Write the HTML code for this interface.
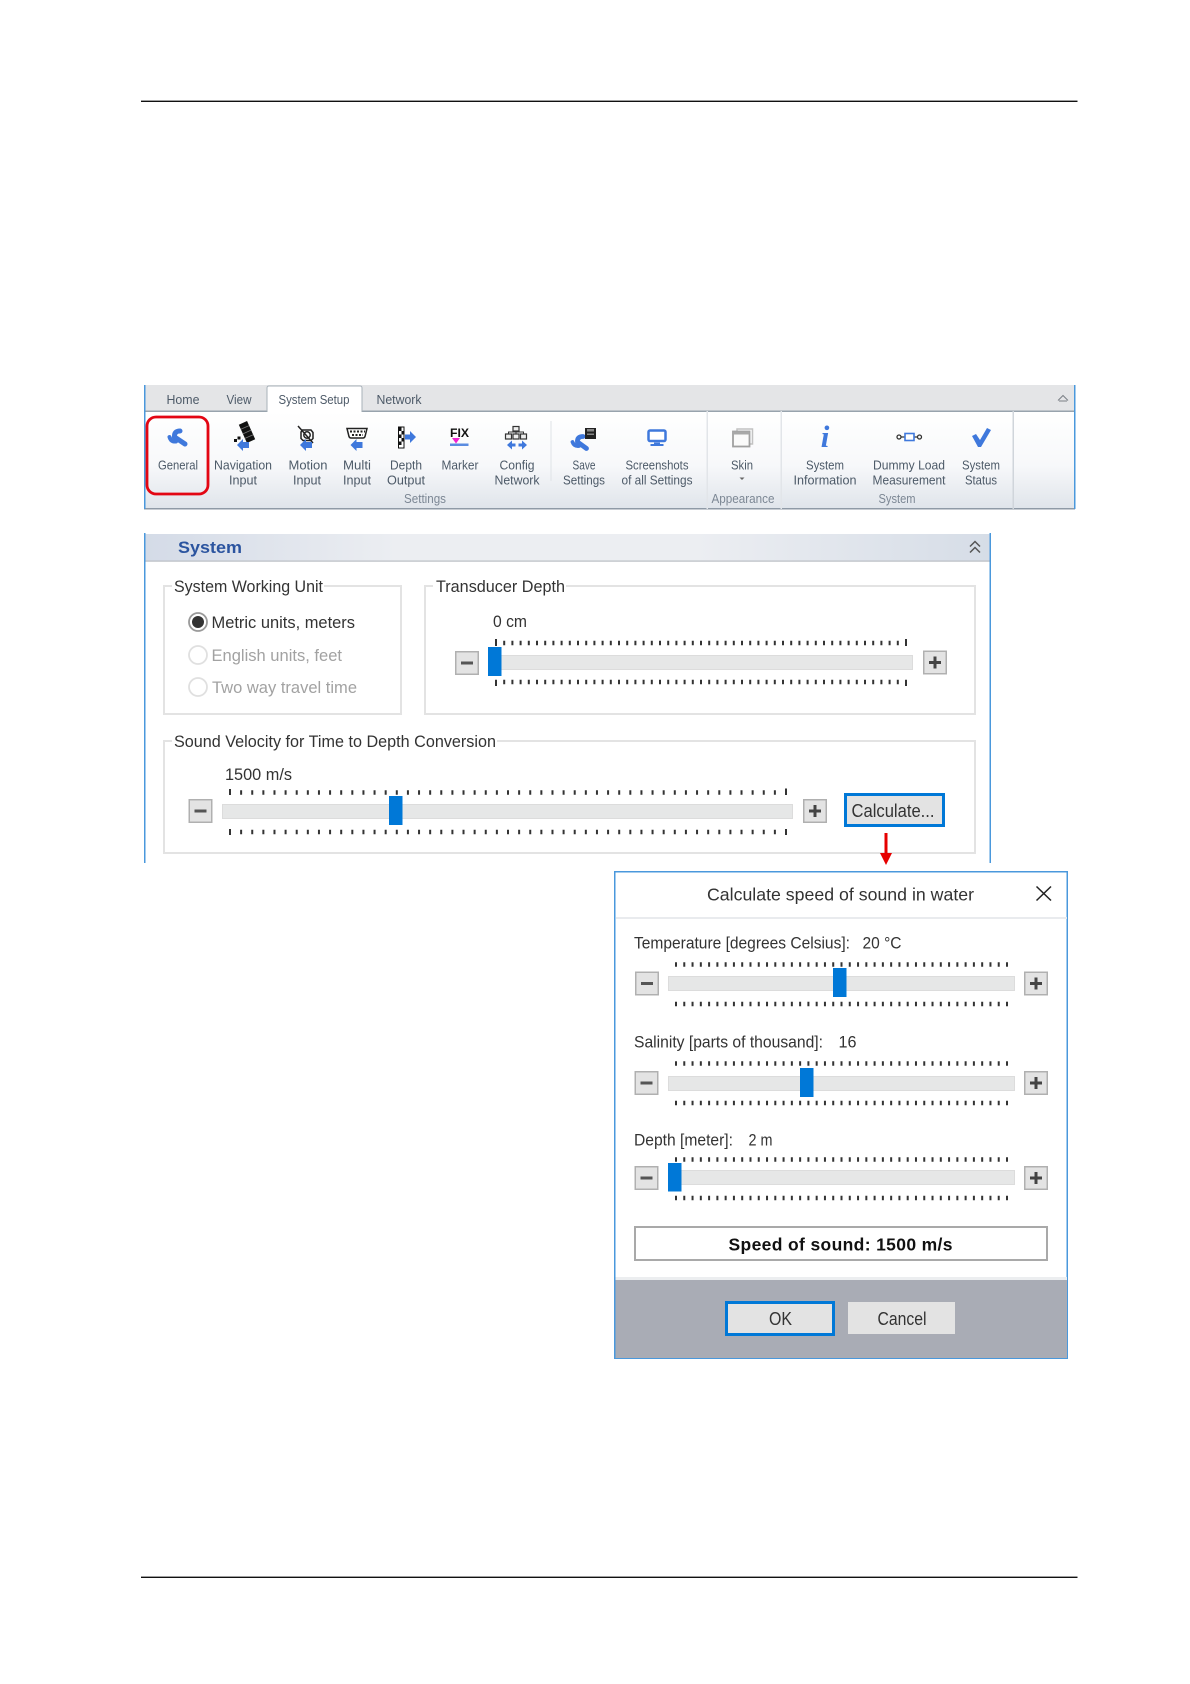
<!DOCTYPE html>
<html><head><meta charset="utf-8"><title>System Setup</title>
<style>
html,body{margin:0;padding:0;background:#fff;width:1190px;height:1684px;overflow:hidden}
svg{display:block;font-family:"Liberation Sans",sans-serif;filter:blur(.3px)}
.r{font-size:13px;fill:#4d5a68;text-anchor:middle}
.g{font-size:13px;fill:#7c8794;text-anchor:middle}
.t{font-size:17px;fill:#333}
.d{font-size:17px;fill:#a2a2a2}
.tk{stroke:#333;fill:none}
.bb{fill:#e3e3e3;stroke:#b0b0b0;stroke-width:1.5}
.tr{fill:#e6e7e7;stroke:#dcdcdc}
.th{fill:#0078d7}
.gb{fill:none;stroke:#e3e3e3;stroke-width:2}
.bl{fill:#3f78dc}
</style></head><body>
<svg width="1190" height="1684" viewBox="0 0 1190 1684" xmlns="http://www.w3.org/2000/svg">
<defs>
<linearGradient id="rb" x1="0" y1="0" x2="0" y2="1"><stop offset="0" stop-color="#fff"/><stop offset=".55" stop-color="#f7f8fa"/><stop offset="1" stop-color="#dfe4ea"/></linearGradient>
<linearGradient id="hd" x1="0" y1="0" x2="1" y2="0"><stop offset="0" stop-color="#d4dbe7"/><stop offset=".3" stop-color="#eceef2"/><stop offset=".65" stop-color="#eceef2"/><stop offset="1" stop-color="#d6dde7"/></linearGradient>
<g id="minus"><rect class="bb" x=".75" y=".75" width="22.5" height="22.5"/><rect x="6" y="10.5" width="12" height="3" fill="#555"/></g>
<g id="plus"><rect class="bb" x=".75" y=".75" width="22.5" height="22.5"/><rect x="6" y="10.5" width="12" height="3" fill="#444"/><rect x="10.5" y="6" width="3" height="12" fill="#444"/></g>
<path id="arl" d="M-6 0L0-6V-3H6V3H0V6Z" class="bl"/>
</defs>
<rect width="1190" height="1684" fill="#fff"/>
<rect x="141" y="100.6" width="936.500" height="1.4" fill="#111"/>
<rect x="141" y="1576.6" width="936.500" height="1.4" fill="#111"/>

<!-- ribbon -->
<rect x="144" y="385" width="931" height="26" fill="#e4e5e7"/>
<rect x="144" y="411" width="931" height="98" fill="url(#rb)"/>
<rect x="144" y="410.5" width="931" height="1.5" fill="#98a3ad"/>
<rect x="144" y="508" width="931" height="1.5" fill="#8f9aa6"/>
<rect x="144" y="385" width="1.5" height="124" fill="#4a98dc"/>
<rect x="1074" y="385" width="1.5" height="124" fill="#4a98dc"/>
<path d="M267 411V388Q267 386 269 386H360Q362 386 362 388V411H267Z" fill="#fff" stroke="#a9b2ba"/>
<rect x="267.500" y="410" width="94" height="3" fill="#fff"/>
<text class="r" x="183" y="404" textLength="33" lengthAdjust="spacingAndGlyphs">Home</text>
<text class="r" x="239" y="404" textLength="25" lengthAdjust="spacingAndGlyphs">View</text>
<text class="r" x="314" y="404" textLength="71" lengthAdjust="spacingAndGlyphs">System Setup</text>
<text class="r" x="399" y="404" textLength="45" lengthAdjust="spacingAndGlyphs">Network</text>
<path d="M1058 400.500L1063 395.500L1068 400.500M1059 401H1067" fill="none" stroke="#7a7f85" stroke-width="1"/>
<rect x="550.500" y="421" width="1" height="60" fill="#dfe3e7"/>
<rect x="706.500" y="411" width="1.500" height="98" fill="#e2e5e9"/>
<rect x="780.500" y="411" width="1.500" height="98" fill="#e2e5e9"/>
<rect x="1012.500" y="411" width="1.500" height="98" fill="#d0d5db"/>

<rect x="147" y="417" width="61" height="77" rx="9" fill="none" stroke="#e30613" stroke-width="2.800"/>

<!-- ribbon icons -->
<g fill="none" stroke="#3f78dc" stroke-linecap="round">
<path d="M180 431Q174 431 174.500 437L185 444" stroke-width="5"/>
<path d="M169.500 437Q171 442 176 441.500" stroke-width="4"/>
</g>
<!-- navigation -->
<g transform="translate(247 432) rotate(-24)"><rect x="-4.500" y="-10" width="9" height="20" fill="#111"/><path d="M-4.500-5H4.500M-4.500 0H4.500M-4.500 5H4.500" stroke="#777" stroke-width=".8"/></g>
<rect x="234" y="439" width="3" height="3" fill="#111"/><rect x="237.500" y="436.500" width="3" height="3" fill="#111"/>
<use href="#arl" x="243" y="445"/>
<!-- motion -->
<g fill="none" stroke="#222"><path d="M298 426L313 443" stroke-width="1.500"/><path d="M302.500 430H311L313 432.500V438.500L311 440.500H303L301 438.500V432Z" stroke-width="1.500"/><circle cx="307" cy="435" r="3.200" stroke-width="1.500"/></g>
<use href="#arl" x="306" y="445"/>
<!-- multi -->
<path d="M347 428.500H367L365 436.500Q364.500 438 363 438H351Q349.500 438 349 436.500Z" fill="#fff" stroke="#222" stroke-width="1.500"/>
<path d="M350 431.500H365M352 435H363" stroke="#222" stroke-width="2" stroke-dasharray="2 1.500"/>
<use href="#arl" x="356.500" y="445"/>
<!-- depth -->
<rect x="398.500" y="427" width="5.500" height="21" fill="#fff" stroke="#111"/>
<path d="M399 427.500h2.500v3.500H399zM401.500 431H404V434.500H401.500zM399 434.500h2.500v3.500H399zM401.500 438H404V441.500H401.500zM399 441.500h2.500v3.500H399z" fill="#111"/>
<path d="M405 434.500H410V431L416 437L410 443V439.500H405Z" class="bl"/>
<!-- marker -->
<text x="459.500" y="437" text-anchor="middle" font-size="11.500" font-weight="bold" fill="#111" textLength="19" lengthAdjust="spacingAndGlyphs">FIX</text>
<path d="M452 438H460L456 443.500Z" fill="#f020d0"/>
<rect x="450" y="443.500" width="18.500" height="2.500" fill="#5a8be0"/>
<!-- config -->
<g fill="#eee" stroke="#333" stroke-width="1.200"><rect x="513" y="426.500" width="6" height="4.500"/><rect x="505.500" y="434" width="6" height="5"/><rect x="513" y="434" width="6" height="5"/><rect x="520.500" y="434" width="6" height="5"/></g>
<path d="M508.500 434V432H523.500V434M516 431V434" fill="none" stroke="#333"/>
<path d="M507 445L512 440.500V443.500H515.500V446.500H512V449.500Z" class="bl"/>
<path d="M527 445L522 440.500V443.500H518.500V446.500H522V449.500Z" class="bl"/>
<!-- save -->
<g fill="none" stroke="#3f78dc" stroke-linecap="round">
<path d="M583 436.500Q577 436.500 577.500 442L586.500 448.500" stroke-width="4.800"/>
<path d="M572.500 442Q574 446.500 579 446" stroke-width="3.800"/>
</g>
<rect x="585" y="428" width="11" height="11" fill="#222"/><rect x="587" y="429" width="7" height="2.500" fill="#888"/><rect x="587" y="433.500" width="7" height="1.500" fill="#888"/>
<!-- monitor -->
<rect x="648.500" y="430.500" width="17" height="10.500" rx="1.500" fill="#fff" stroke="#3f78dc" stroke-width="2.500"/>
<path d="M654 442.500H660V444H663.500V446H650.500V444H654Z" class="bl"/>
<!-- skin -->
<path d="M737 431V429H752.500V444H750" fill="none" stroke="#c2c2c2" stroke-width="1.500"/>
<rect x="733" y="431.500" width="16.500" height="15" fill="#fafafa" stroke="#a0a0a0" stroke-width="1.800"/>
<rect x="733" y="431.500" width="16.500" height="3" fill="#a8a8a8"/>
<!-- info -->
<text x="825" y="447" text-anchor="middle" font-family="Liberation Serif,serif" font-style="italic" font-weight="bold" font-size="31" fill="#3f78dc">i</text>
<!-- dummy -->
<g fill="none" stroke="#333" stroke-width="1.300"><circle cx="899" cy="437" r="2"/><circle cx="919.500" cy="437" r="2"/><path d="M901 437H905M914 437H917.500"/></g>
<rect x="905" y="433.500" width="9" height="7" fill="#fff" stroke="#3f78dc" stroke-width="1.600"/>
<!-- check -->
<path d="M972 436L976 434L980 440L987 428L991 430L981 447H978Z" class="bl"/>

<!-- ribbon labels -->
<text class="r" x="178" y="469.500" textLength="40" lengthAdjust="spacingAndGlyphs">General</text>
<text class="r" x="243" y="469.500" textLength="58" lengthAdjust="spacingAndGlyphs">Navigation</text>
<text class="r" x="243" y="484.500" textLength="28" lengthAdjust="spacingAndGlyphs">Input</text>
<text class="r" x="308" y="469.500" textLength="39" lengthAdjust="spacingAndGlyphs">Motion</text>
<text class="r" x="307" y="484.500" textLength="28" lengthAdjust="spacingAndGlyphs">Input</text>
<text class="r" x="357" y="469.500" textLength="28" lengthAdjust="spacingAndGlyphs">Multi</text>
<text class="r" x="357" y="484.500" textLength="28" lengthAdjust="spacingAndGlyphs">Input</text>
<text class="r" x="406" y="469.500" textLength="32" lengthAdjust="spacingAndGlyphs">Depth</text>
<text class="r" x="406" y="484.500" textLength="38" lengthAdjust="spacingAndGlyphs">Output</text>
<text class="r" x="460" y="469.500" textLength="37" lengthAdjust="spacingAndGlyphs">Marker</text>
<text class="r" x="517" y="469.500" textLength="35" lengthAdjust="spacingAndGlyphs">Config</text>
<text class="r" x="517" y="484.500" textLength="45" lengthAdjust="spacingAndGlyphs">Network</text>
<text class="r" x="584" y="469.500" textLength="23" lengthAdjust="spacingAndGlyphs">Save</text>
<text class="r" x="584" y="484.500" textLength="42" lengthAdjust="spacingAndGlyphs">Settings</text>
<text class="g" x="425" y="503" textLength="42" lengthAdjust="spacingAndGlyphs">Settings</text>
<text class="r" x="657" y="469.500" textLength="63" lengthAdjust="spacingAndGlyphs">Screenshots</text>
<text class="r" x="657" y="484.500" textLength="71" lengthAdjust="spacingAndGlyphs">of all Settings</text>
<text class="r" x="742" y="469.500" textLength="22" lengthAdjust="spacingAndGlyphs">Skin</text>
<path d="M739.500 477.500H744.500L742 480Z" fill="#666"/>
<text class="g" x="743" y="503" textLength="63" lengthAdjust="spacingAndGlyphs">Appearance</text>
<text class="r" x="825" y="469.500" textLength="38" lengthAdjust="spacingAndGlyphs">System</text>
<text class="r" x="825" y="484.500" textLength="63" lengthAdjust="spacingAndGlyphs">Information</text>
<text class="r" x="909" y="469.500" textLength="72" lengthAdjust="spacingAndGlyphs">Dummy Load</text>
<text class="r" x="909" y="484.500" textLength="73" lengthAdjust="spacingAndGlyphs">Measurement</text>
<text class="r" x="981" y="469.500" textLength="38" lengthAdjust="spacingAndGlyphs">System</text>
<text class="r" x="981" y="484.500" textLength="32" lengthAdjust="spacingAndGlyphs">Status</text>
<text class="g" x="897" y="503" textLength="37" lengthAdjust="spacingAndGlyphs">System</text>

<!-- system panel -->
<rect x="145" y="534" width="845" height="27" fill="url(#hd)"/>
<rect x="145" y="560.500" width="845" height="1.200" fill="#b9bdc3"/>
<rect x="144" y="533" width="1.500" height="330" fill="#4a98dc"/>
<rect x="989.500" y="533" width="1.500" height="330" fill="#4a98dc"/>
<text x="178" y="553" font-size="17" font-weight="bold" fill="#2b549f" textLength="64" lengthAdjust="spacingAndGlyphs">System</text>
<path d="M970 546.500L975 541.500L980 546.500M970 552.500L975 547.500L980 552.500" fill="none" stroke="#555" stroke-width="1.500"/>

<rect class="gb" x="164" y="586" width="237" height="128"/>
<rect class="gb" x="425" y="586" width="550" height="128"/>
<rect class="gb" x="164" y="741" width="811" height="112"/>
<rect x="172" y="583" width="152" height="7" fill="#fff"/>
<rect x="433" y="583" width="133" height="7" fill="#fff"/>
<rect x="172" y="738" width="325" height="7" fill="#fff"/>
<text class="t" x="174" y="592" textLength="149" lengthAdjust="spacingAndGlyphs">System Working Unit</text>
<text class="t" x="436" y="592" textLength="129" lengthAdjust="spacingAndGlyphs">Transducer Depth</text>
<text class="t" x="174" y="747" textLength="322" lengthAdjust="spacingAndGlyphs">Sound Velocity for Time to Depth Conversion</text>

<circle cx="198" cy="622" r="9" fill="#fff" stroke="#9a9a9a" stroke-width="1.800"/><circle cx="198" cy="622" r="6" fill="#333"/>
<circle cx="198" cy="655" r="9" fill="#fff" stroke="#e0e0e0" stroke-width="1.800"/>
<circle cx="198" cy="687" r="9" fill="#fff" stroke="#e0e0e0" stroke-width="1.800"/>
<text class="t" x="211.500" y="628" textLength="143.500" lengthAdjust="spacingAndGlyphs">Metric units, meters</text>
<text class="d" x="211.500" y="661" textLength="130.500" lengthAdjust="spacingAndGlyphs">English units, feet</text>
<text class="d" x="212" y="693" textLength="145" lengthAdjust="spacingAndGlyphs">Two way travel time</text>

<text class="t" x="493" y="627" textLength="34" lengthAdjust="spacingAndGlyphs">0 cm</text>
<line class="tk" x1="495" x2="907" y1="643" y2="643" stroke-width="4.500" stroke-dasharray="2 6.200"/>
<line class="tk" x1="495" x2="907" y1="682" y2="682" stroke-width="4.500" stroke-dasharray="2 6.200"/>
<rect x="495" y="639" width="2" height="7" fill="#333"/><rect x="905" y="639" width="2" height="7" fill="#333"/>
<rect x="495" y="680" width="2" height="6" fill="#333"/><rect x="905" y="680" width="2" height="6" fill="#333"/>
<rect class="tr" x="488.500" y="655.500" width="424" height="14"/>
<rect class="th" x="488" y="647" width="13.500" height="29"/>
<use href="#minus" x="455" y="651"/><use href="#plus" x="923" y="650.500"/>

<text class="t" x="225" y="780" textLength="67" lengthAdjust="spacingAndGlyphs">1500 m/s</text>
<line class="tk" x1="229" x2="787" y1="792.500" y2="792.500" stroke-width="4.500" stroke-dasharray="2 9.120"/>
<line class="tk" x1="229" x2="787" y1="832" y2="832" stroke-width="4.500" stroke-dasharray="2 9.120"/>
<rect x="229" y="789" width="2" height="6" fill="#333"/><rect x="785" y="788.500" width="2" height="6.500" fill="#333"/>
<rect x="229" y="829" width="2" height="6" fill="#333"/><rect x="785" y="829" width="2" height="6" fill="#333"/>
<rect class="tr" x="222.500" y="804.500" width="570" height="14"/>
<rect class="th" x="389" y="796" width="13.500" height="29"/>
<use href="#minus" x="188.500" y="799"/><use href="#plus" x="803" y="799"/>

<rect x="845.500" y="794.500" width="98" height="31" fill="#e3e3e3" stroke="#0078d7" stroke-width="3"/>
<text x="851.500" y="817" font-size="18" fill="#333" textLength="83" lengthAdjust="spacingAndGlyphs">Calculate...</text>
<rect x="884.500" y="833" width="3" height="21" fill="#e60000"/>
<path d="M880 853H892L886 865Z" fill="#e60000"/>

<!-- dialog -->
<rect x="614.750" y="871.750" width="452.500" height="486.500" fill="#fff" stroke="#4a98dc" stroke-width="1.500"/>
<text x="707" y="900.500" font-size="17.500" fill="#333" textLength="267" lengthAdjust="spacingAndGlyphs">Calculate speed of sound in water</text>
<path d="M1036.500 886.500L1051 900.500M1051 886.500L1036.500 900.500" stroke="#222" stroke-width="1.500" fill="none"/>
<rect x="616" y="917" width="451" height="2" fill="#e9ebee"/>

<text class="t" x="634" y="948.500" textLength="216" lengthAdjust="spacingAndGlyphs">Temperature [degrees Celsius]:</text>
<text class="t" x="862.500" y="948.500" textLength="39" lengthAdjust="spacingAndGlyphs">20 °C</text>
<line class="tk" x1="675" x2="1008" y1="964.500" y2="964.500" stroke-width="4.500" stroke-dasharray="2 6.275"/>
<line class="tk" x1="675" x2="1008" y1="1004" y2="1004" stroke-width="4.500" stroke-dasharray="2 6.275"/>
<rect class="tr" x="668.500" y="976.500" width="346" height="14"/>
<rect class="th" x="833" y="968" width="13.500" height="29"/>
<use href="#minus" x="635" y="971.500"/><use href="#plus" x="1024" y="971.500"/>

<text class="t" x="634" y="1047.500" textLength="189" lengthAdjust="spacingAndGlyphs">Salinity [parts of thousand]:</text>
<text class="t" x="838.500" y="1047.500" textLength="18" lengthAdjust="spacingAndGlyphs">16</text>
<line class="tk" x1="675" x2="1008" y1="1063.500" y2="1063.500" stroke-width="4.500" stroke-dasharray="2 6.275"/>
<line class="tk" x1="675" x2="1008" y1="1103" y2="1103" stroke-width="4.500" stroke-dasharray="2 6.275"/>
<rect class="tr" x="668.500" y="1076.500" width="346" height="14"/>
<rect class="th" x="800" y="1068" width="13.500" height="29"/>
<use href="#minus" x="634.500" y="1071"/><use href="#plus" x="1024" y="1071"/>

<text class="t" x="634" y="1145.500" textLength="99" lengthAdjust="spacingAndGlyphs">Depth [meter]:</text>
<text class="t" x="748.500" y="1145.500" textLength="24" lengthAdjust="spacingAndGlyphs">2 m</text>
<line class="tk" x1="675" x2="1008" y1="1159.500" y2="1159.500" stroke-width="4.500" stroke-dasharray="2 6.275"/>
<line class="tk" x1="675" x2="1008" y1="1198" y2="1198" stroke-width="4.500" stroke-dasharray="2 6.275"/>
<rect class="tr" x="668.500" y="1170.500" width="346" height="14"/>
<rect class="th" x="668" y="1163" width="13.500" height="28.500"/>
<use href="#minus" x="634.500" y="1166"/><use href="#plus" x="1024" y="1166"/>

<rect x="635" y="1227" width="412" height="33" fill="#fff" stroke="#a9a9a9" stroke-width="2"/>
<text x="728.500" y="1250.500" font-size="17.500" font-weight="bold" fill="#111" textLength="224" lengthAdjust="spacing">Speed of sound: 1500 m/s</text>
<rect x="615.500" y="1280" width="451.500" height="78" fill="#a9acb5"/>
<rect x="615.500" y="1277" width="451.500" height="3" fill="#eceef0"/>
<rect x="726.500" y="1302.500" width="107" height="32" fill="#e3e3e3" stroke="#0078d7" stroke-width="3"/>
<rect x="848" y="1302" width="107" height="32" fill="#e3e3e3"/>
<text x="769" y="1325" font-size="18" fill="#333" textLength="23" lengthAdjust="spacingAndGlyphs">OK</text>
<text x="877.500" y="1325" font-size="18" fill="#333" textLength="49" lengthAdjust="spacingAndGlyphs">Cancel</text>
</svg>
</body></html>
